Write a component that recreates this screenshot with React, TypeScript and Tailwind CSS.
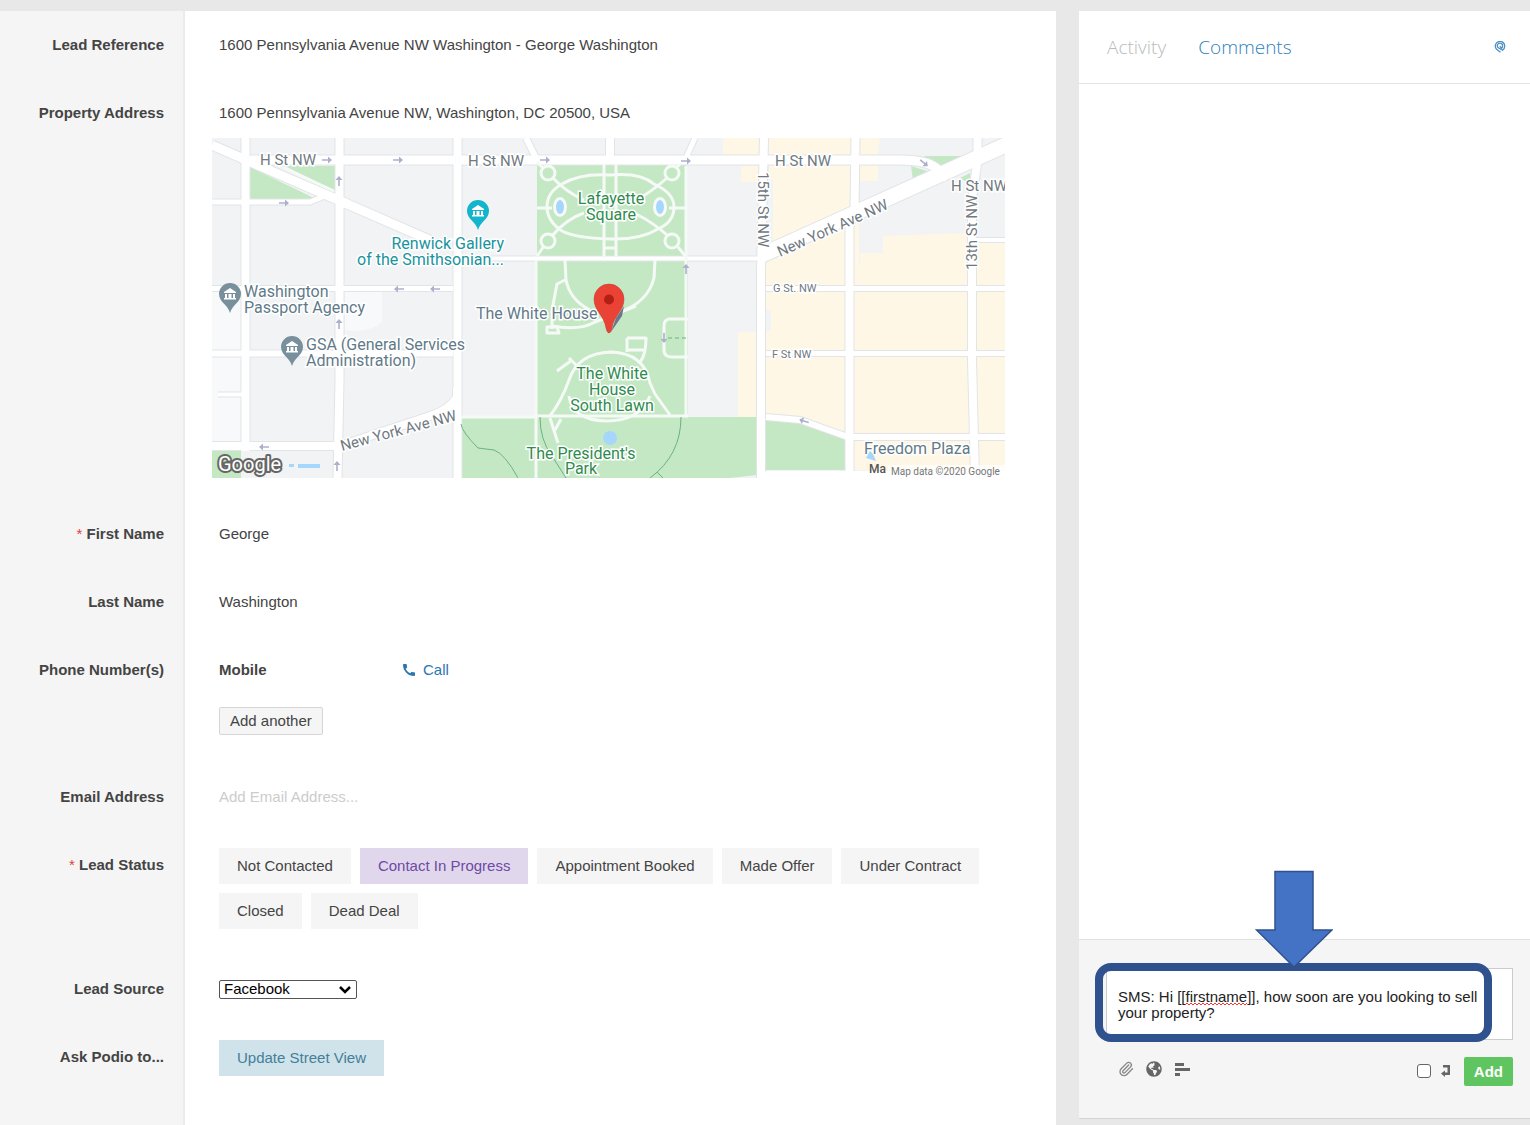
import { useState } from "react";
import type { ReactNode } from "react";
import { FaGlobeAmericas } from "react-icons/fa";
import { MdCall } from "react-icons/md";
import { Paperclip } from "lucide-react";

const statuses = [
  "Not Contacted",
  "Contact In Progress",
  "Appointment Booked",
  "Made Offer",
  "Under Contract",
  "Closed",
  "Dead Deal",
];

const sources = ["Facebook", "Google", "Direct Mail", "Referral"];

// streets, drawn once as a casing and once as the white road surface
const roads: { d: string; w: number }[] = [
  { d: "M245.5 138V451", w: 8 },
  { d: "M339.5 138V380L337.5 478", w: 8 },
  { d: "M457.5 138V478", w: 8 },
  { d: "M250 160H900Q926 160 936 168L948 178", w: 9 },
  { d: "M212 145L262 167L345 203L432 241", w: 9 },
  { d: "M212 202H310L325 196", w: 5 },
  { d: "M212 288.5H453", w: 5 },
  { d: "M212 353.5H453", w: 6 },
  { d: "M218 394.5H242", w: 4 },
  { d: "M212 446H337", w: 8 },
  { d: "M337 447L430 416Q450 410 457 397V388", w: 8 },
  { d: "M526 138L538 162", w: 6 },
  { d: "M610 138V162", w: 8 },
  { d: "M695 138L685 160", w: 5 },
  { d: "M462 258.5H762", w: 4 },
  { d: "M764 138L761 270V478", w: 8 },
  { d: "M855.5 138L854.5 212L849.5 226V478", w: 8 },
  { d: "M977.5 138V160L972 200V360L975 478", w: 8 },
  { d: "M762 255L1010 143", w: 15 },
  { d: "M766 288.5H1005", w: 5 },
  { d: "M976 240H1005", w: 4 },
  { d: "M766 353.5H1005", w: 5 },
  { d: "M766 417L800 420L848 437H1005", w: 6 },
];

// footpaths inside the parks
const paths: string[] = [
  "M284 168L334 191",
  "M604 164V258M616 164V258M604 248H616",
  "M610 175Q640 172 654 184Q674 193 674 207Q674 222 658 229Q640 240 610 239Q575 238 562 231Q547 221 547 207Q547 192 562 184Q580 173 610 175Z",
  "M553 178Q566 192 584 200M667 178Q650 193 636 200M552 236Q566 219 584 213M668 236Q654 223 636 214",
  "M537 208H552M669 208H687M537 256L544 246M686 257L678 247",
  "M537 162L543 168M680 164L674 170",
  "M565 260L566 280Q570 300 590 310M655 260L654 278Q648 302 620 312",
  "M565 280L557 284L552 310V329M552 326Q580 331 595 322L636 306",
  "M547 327H557L559 333H547Z",
  "M550 416Q562 400 569 380Q578 353 611 352Q644 353 650 383L655 394L670 415",
  "M569 396Q572 420 606 421Q640 421 650 396",
  "M557 371L572 360M569 358L577 366",
  "M627 338H646Q646 355 640 362M627 338V352M627 350H646",
  "M688 319H670Q664 319 664 326V350Q664 357 672 357H688",
  "M536 416H688M536 260V478M686 166V416",
  "M550 418L558 443M561 419L555 430",
  "M461 417H536",
];

type Arrow = { x: number; y: number; r: number };

const arrows: Arrow[] = [
  { x: 327, y: 160, r: 0 },
  { x: 398, y: 160, r: 0 },
  { x: 545, y: 160, r: 0 },
  { x: 686, y: 161, r: 0 },
  { x: 284, y: 203, r: 0 },
  { x: 339, y: 181, r: -90 },
  { x: 339, y: 324, r: -90 },
  { x: 337, y: 466, r: -90 },
  { x: 686, y: 269, r: -90 },
  { x: 399, y: 289, r: 180 },
  { x: 435, y: 289, r: 180 },
  { x: 264, y: 447, r: 180 },
  { x: 804, y: 421, r: 198 },
  { x: 924, y: 163, r: 40 },
  { x: 664, y: 338, r: 90 },
];

function PlacePin({ x, y, color }: { x: number; y: number; color: string }) {
  return (
    <g transform={`translate(${x} ${y})`}>
      <path
        d="M0 19C-2 11-11 8-11 0A11 11 0 0 1 11 0C11 8 2 11 0 19Z"
        fill={color}
      />
      <path
        d="M-6-2L0-6L6-2V-1H-6ZM-5 0H-3V4H-5ZM-1.5 0H1.5V4H-1.5ZM3 0H5V4H3ZM-6 4H6V5.500H-6Z"
        fill="#fff"
      />
    </g>
  );
}

function PropertyMap() {
  return (
    <svg
      viewBox="212 138 793 340"
      className="block h-auto w-full font-[Roboto,sans-serif]"
      role="img"
      aria-label="Map of 1600 Pennsylvania Avenue NW"
    >
      <rect x="212" y="138" width="793" height="340" fill="#f1f3f4" />

      {/* Blocks */}
      <path d="M212 290H241V442H212ZM345 292H382V322Q372 333 345 330Z" fill="#f8f9fb" />
      <path
        d="M723 138H759V155H723ZM741 166H759V182H741ZM738 332H760V417H738ZM769 138H880L878 152V181H859V265H860V253H883V236L967 233V240H1005V470H854V434L766 416V331H771V310H766V250H773V180H769Z"
        fill="#fef7e6"
      />
      <g fill="#c4e8c4">
        <path d="M250 167L316 199H250ZM285 166H335V191Z" />
        <path d="M537 165H686V257H537ZM536 260H688V416H536Z" />
        <path d="M461 417H757V475L730 478H461Z" />
        <path d="M766 420L800 423L845 438V470H766Z" />
        <path d="M212 451H241V478H212ZM924 156H964L937 170ZM911 166L930 172L913 180ZM960 178L970 173V184Z" />
      </g>

      {/* Streets */}
      <g fill="none" stroke="#e1e4e8">
        {roads.map((road) => (
          <path key={road.d} d={road.d} strokeWidth={road.w + 2} />
        ))}
      </g>
      <g fill="none" stroke="#fff">
        {roads.map((road) => (
          <path key={road.d} d={road.d} strokeWidth={road.w} />
        ))}
      </g>
      <path d="M766 471H1005V478H757Z" fill="#fff" />

      {/* Park paths */}
      <g fill="none" stroke="#f6faf7" strokeWidth="3" strokeLinejoin="round">
        {paths.map((d) => (
          <path key={d} d={d} />
        ))}
      </g>
      <g fill="#c4e8c4" stroke="#f6faf7" strokeWidth="3">
        <circle cx="548" cy="173" r="7" />
        <circle cx="672" cy="173" r="7" />
        <circle cx="548" cy="241" r="7" />
        <circle cx="672" cy="241" r="7" />
      </g>
      <g fill="#a6d6fc">
        <ellipse cx="560" cy="207" rx="5.500" ry="8.500" stroke="#f6faf7" strokeWidth="3" />
        <ellipse cx="660" cy="207" rx="5.500" ry="8.500" stroke="#f6faf7" strokeWidth="3" />
        <circle cx="610" cy="438" r="7" />
        <path d="M289 464H294V467H289ZM298 464H320V468H298Z" />
      </g>
      <g fill="none" stroke="#6bb184">
        <path d="M461 424Q462 432 478 448L494 450Q505 454 518 478" />
        <path d="M540 417Q540 440 552 456L566 478" />
        <path d="M681 417Q681 455 650 478M657 472L663 478" />
        <path d="M668 338H687" strokeDasharray="4 3" />
      </g>

      {/* One way arrows */}
      {arrows.map((arrow) => (
        <path
          key={`${arrow.x}-${arrow.y}`}
          transform={`translate(${arrow.x} ${arrow.y}) rotate(${arrow.r})`}
          d="M-5-.8H1V-3.500L5 0L1 3.500V.8H-5Z"
          fill="#adb0cd"
        />
      ))}

      {/* Street names */}
      <g fill="#70797f" stroke="#fff" strokeWidth="3" paintOrder="stroke" fontSize="15">
        <text x="260" y="165">H St NW</text>
        <text x="468" y="166">H St NW</text>
        <text x="775" y="166">H St NW</text>
        <text x="951" y="191">H St NW</text>
        <text transform="translate(758 172) rotate(90)">15th St NW</text>
        <text transform="translate(977 270) rotate(-90)">13th St NW</text>
        <text transform="translate(780 257) rotate(-24)">New York Ave NW</text>
        <text transform="translate(342 451) rotate(-15)">New York Ave NW</text>
        <g fontSize="11">
          <text x="773" y="292">G St. NW</text>
          <text x="772" y="358">F St NW</text>
        </g>
      </g>

      {/* Places */}
      <g strokeWidth="3" paintOrder="stroke" fontSize="16" stroke="#fff">
        <g fill="#5f7a89">
          <text x="244" y="297">Washington</text>
          <text x="244" y="313">Passport Agency</text>
          <text x="306" y="350">GSA (General Services</text>
          <text x="306" y="366">Administration)</text>
          <text x="476" y="319">The White House</text>
          <text x="864" y="454">Freedom Plaza</text>
        </g>
        <g fill="#1a939d" textAnchor="end">
          <text x="504" y="249">Renwick Gallery</text>
          <text x="504" y="265">of the Smithsonian...</text>
        </g>
        <g fill="#2e8b4d" textAnchor="middle">
          <text x="611" y="204">Lafayette</text>
          <text x="611" y="220">Square</text>
          <text x="612" y="379">The White</text>
          <text x="612" y="395">House</text>
          <text x="612" y="411">South Lawn</text>
          <text x="581" y="459">The President's</text>
          <text x="581" y="474">Park</text>
        </g>
      </g>
      <path d="M870 451L873 454L876 461L866 458Z" fill="#a6d6fc" />

      <PlacePin x={478} y={211} color="#12b5cb" />
      <PlacePin x={230} y={294} color="#78909c" />
      <PlacePin x={292} y={347} color="#78909c" />

      {/* Property marker */}
      <path d="M611 332L616 318L624 306L622 316L613 329Z" fill="#68788a" />
      <path
        d="M609 333Q607 333 606 328C604 315 594 311 594 299A15 15 0 0 1 624 299C624 311 614 315 612 328Q611 333 609 333Z"
        fill="#ea4335"
        stroke="#b93b30"
        strokeWidth=".5"
      />
      <circle cx="609" cy="299.500" r="5" fill="#b11f16" />

      <text
        x="218"
        y="471"
        fill="#fff"
        stroke="#666"
        strokeWidth="4"
        strokeLinejoin="round"
        paintOrder="stroke"
        fontSize="20"
      >
        Google
      </text>
      <path d="M888 465H1005V478H888Z" fill="#fff" opacity=".7" />
      <text x="869" y="473" fill="#555" fontSize="12" fontWeight="500">Ma</text>
      <text x="891" y="475" fill="#777" fontSize="10">Map data ©2020 Google</text>
    </svg>
  );
}

type RowProps = {
  label: string;
  htmlFor?: string;
  required?: boolean;
  className?: string;
  children: ReactNode;
};

function Row({ label, htmlFor, required, className = "py-[22px]", children }: RowProps) {
  return (
    <div className="flex">
      <div className="w-[185px] shrink-0 border-r-2 border-[#ebebeb] bg-[#f5f5f5] pt-[22px] pr-[19px] text-right font-bold">
        {required && <span className="font-normal text-[#e0403c]">* </span>}
        {htmlFor ? <label htmlFor={htmlFor}>{label}</label> : label}
      </div>
      <div className={`min-w-0 flex-1 pr-[51px] pl-[27px] ${className}`}>{children}</div>
    </div>
  );
}

export default function App() {
  const [status, setStatus] = useState("Contact In Progress");
  const [comment, setComment] = useState(
    "SMS: Hi [[firstname]], how soon are you looking to sell your property?"
  );

  return (
    <div className="flex min-h-screen gap-[23px] bg-[#e8e8e8] pt-[11px] font-['Liberation_Sans',Arial,sans-serif] text-[15px] leading-6 text-[#444]">
      {/* Lead */}
      <main className="flex min-w-0 flex-1 flex-col bg-white">
        <Row label="Lead Reference">
          <div className="pl-[7px]">
            1600 Pennsylvania Avenue NW Washington - George Washington
          </div>
        </Row>

        <Row label="Property Address">
          <div className="mb-[13px] pl-[7px]">
            1600 Pennsylvania Avenue NW, Washington, DC 20500, USA
          </div>
          <PropertyMap />
        </Row>

        <Row label="First Name" required>
          <div className="pl-[7px]">George</div>
        </Row>

        <Row label="Last Name">
          <div className="pl-[7px]">Washington</div>
        </Row>

        <Row label="Phone Number(s)" className="pt-[22px] pb-7">
          <div className="flex pl-[7px]">
            <span className="w-[182px] font-bold">Mobile</span>
            <a href="#call" className="flex items-center gap-[6px] text-[#2a76b0]">
              <MdCall size={16} />
              Call
            </a>
          </div>
          <button className="mt-[25px] ml-[7px] block h-7 rounded-xs border border-[#d5d5d5] bg-[#f5f5f5] px-[10px] leading-6">
            Add another
          </button>
        </Row>

        <Row label="Email Address" htmlFor="email">
          <input
            id="email"
            type="email"
            placeholder="Add Email Address..."
            className="block h-6 w-full pl-[7px] outline-none placeholder:text-[#ccc]"
          />
        </Row>

        <Row label="Lead Status" required className="pt-[17px] pb-[26px]">
          <div className="flex flex-wrap gap-[9px] pl-[7px]">
            {statuses.map((item) => (
              <button
                key={item}
                onClick={() => setStatus(item)}
                className={`h-9 px-[18px] ${
                  item === status ? "bg-[#e0d7ed] text-[#6f49a3]" : "bg-[#f5f5f5]"
                }`}
              >
                {item}
              </button>
            ))}
          </div>
        </Row>

        <Row label="Lead Source" htmlFor="source">
          <div className="flex h-6 items-center pl-[7px]">
            <div className="relative">
              <select
                id="source"
                className="block h-[19px] w-[138px] appearance-none rounded-xs border border-[#555] bg-white pl-1 leading-4 text-black"
              >
                {sources.map((source) => (
                  <option key={source}>{source}</option>
                ))}
              </select>
              <svg
                viewBox="0 0 12 8"
                className="pointer-events-none absolute top-[6px] right-[6px] h-2 w-3"
              >
                <path d="M1 1L6 6L11 1" fill="none" stroke="#000" strokeWidth="2.500" />
              </svg>
            </div>
          </div>
        </Row>

        <Row label="Ask Podio to..." className="pt-[17px] pb-[15px]">
          <button className="ml-[7px] block h-9 bg-[#d0e3ea] px-[18px] text-[#43809a]">
            Update Street View
          </button>
        </Row>

        <div className="w-[185px] flex-1 border-r-2 border-[#ebebeb] bg-[#f5f5f5]" />
      </main>

      {/* Comments */}
      <aside className="mb-[6px] flex w-[451px] shrink-0 flex-col border-b border-[#d5d5d5] bg-white">
        <nav className="flex h-[73px] items-center gap-8 border-b border-[#e4e4e4] pr-6 pl-7 font-['Open_Sans',sans-serif] text-[19px] font-light">
          <a href="#activity" className="text-[#bbb]">
            Activity
          </a>
          <a href="#comments" className="text-[#2f7fbd]">
            Comments
          </a>
          <button aria-label="Follow" className="ml-auto">
            <svg viewBox="0 0 12 12" className="block h-3 w-3" fill="none" stroke="#4a8fc6">
              <path
                d="M6.500 11.300L2.600 8.300A4.700 4.700 0 1 1 10.700 5.500Q10.600 7.600 8.600 9.300L4.700 7A2.600 2.600 0 1 1 8.500 5.300Q8.500 6.500 7.500 7.300L5.800 5.200"
                strokeWidth="1.300"
              />
            </svg>
          </button>
        </nav>

        <div className="flex-1" />

        <form
          className="border-t border-[#e0e0e0] bg-[#f5f5f5] pt-7 pr-[17px] pb-8 pl-[27px]"
          onSubmit={(e) => e.preventDefault()}
        >
          <div className="relative">
            <textarea
              aria-label="Comment"
              spellCheck={false}
              value={comment}
              onChange={(e) => setComment(e.target.value)}
              className="block h-[72px] w-full resize-none border border-[#ccc] bg-white pt-5 pr-6 pl-[11px] leading-4 text-[#222] outline-none"
            />
            {/* Spelling mark */}
            <svg
              viewBox="0 0 62 4"
              className="pointer-events-none absolute top-[34px] left-[79px] h-1 w-[62px]"
            >
              <path
                d="M0 3L2 1L4 3L6 1L8 3L10 1L12 3L14 1L16 3L18 1L20 3L22 1L24 3L26 1L28 3L30 1L32 3L34 1L36 3L38 1L40 3L42 1L44 3L46 1L48 3L50 1L52 3L54 1L56 3L58 1L60 3L62 1"
                fill="none"
                stroke="#f33"
              />
            </svg>
            {/* Callout */}
            <div className="pointer-events-none absolute -top-[5px] -left-[11px] h-[79px] w-[397px] rounded-2xl border-8 border-[#2f528f]" />
            <svg
              viewBox="0 0 78 98"
              className="pointer-events-none absolute -top-[98px] left-[149px] h-[98px] w-[78px]"
            >
              <path
                d="M20 1.500H58V60H77L39 97L1.500 60H20Z"
                fill="#4472c4"
                stroke="#2f528f"
                strokeWidth="1.500"
              />
            </svg>
          </div>

          <div className="mt-[17px] flex items-start pl-3">
            <div className="flex items-center gap-3 pt-1 text-[#666]">
              <button type="button" aria-label="Attach file">
                <Paperclip size={16} strokeWidth={2} className="text-[#888]" />
              </button>
              <button type="button" aria-label="Add link">
                <FaGlobeAmericas size={16} />
              </button>
              <button type="button" aria-label="Ask a question">
                <svg viewBox="0 0 16 14" className="block h-[14px] w-4" fill="currentColor">
                  <path d="M1 1H10V4H1ZM1 6H16V9H1ZM1 11H6V14H1Z" />
                </svg>
              </button>
            </div>
            <label className="ml-auto flex h-[27px] items-center gap-[10px]">
              <input
                type="checkbox"
                aria-label="Press enter to post"
                className="h-[14px] w-[14px] appearance-none rounded-[3px] border border-[#666] bg-white checked:bg-[#3f8ac4]"
              />
              <svg viewBox="0 0 10 12" className="h-3 w-[10px]" fill="#666">
                <path d="M2 0H9V10H4V12L0 8.500L4 5.500V7.500H6.500V2.500H2Z" />
              </svg>
            </label>
            <button className="ml-[13px] h-[29px] rounded-xs bg-[#5fc561] px-[10px] font-bold text-white">
              Add
            </button>
          </div>
        </form>
      </aside>
    </div>
  );
}
